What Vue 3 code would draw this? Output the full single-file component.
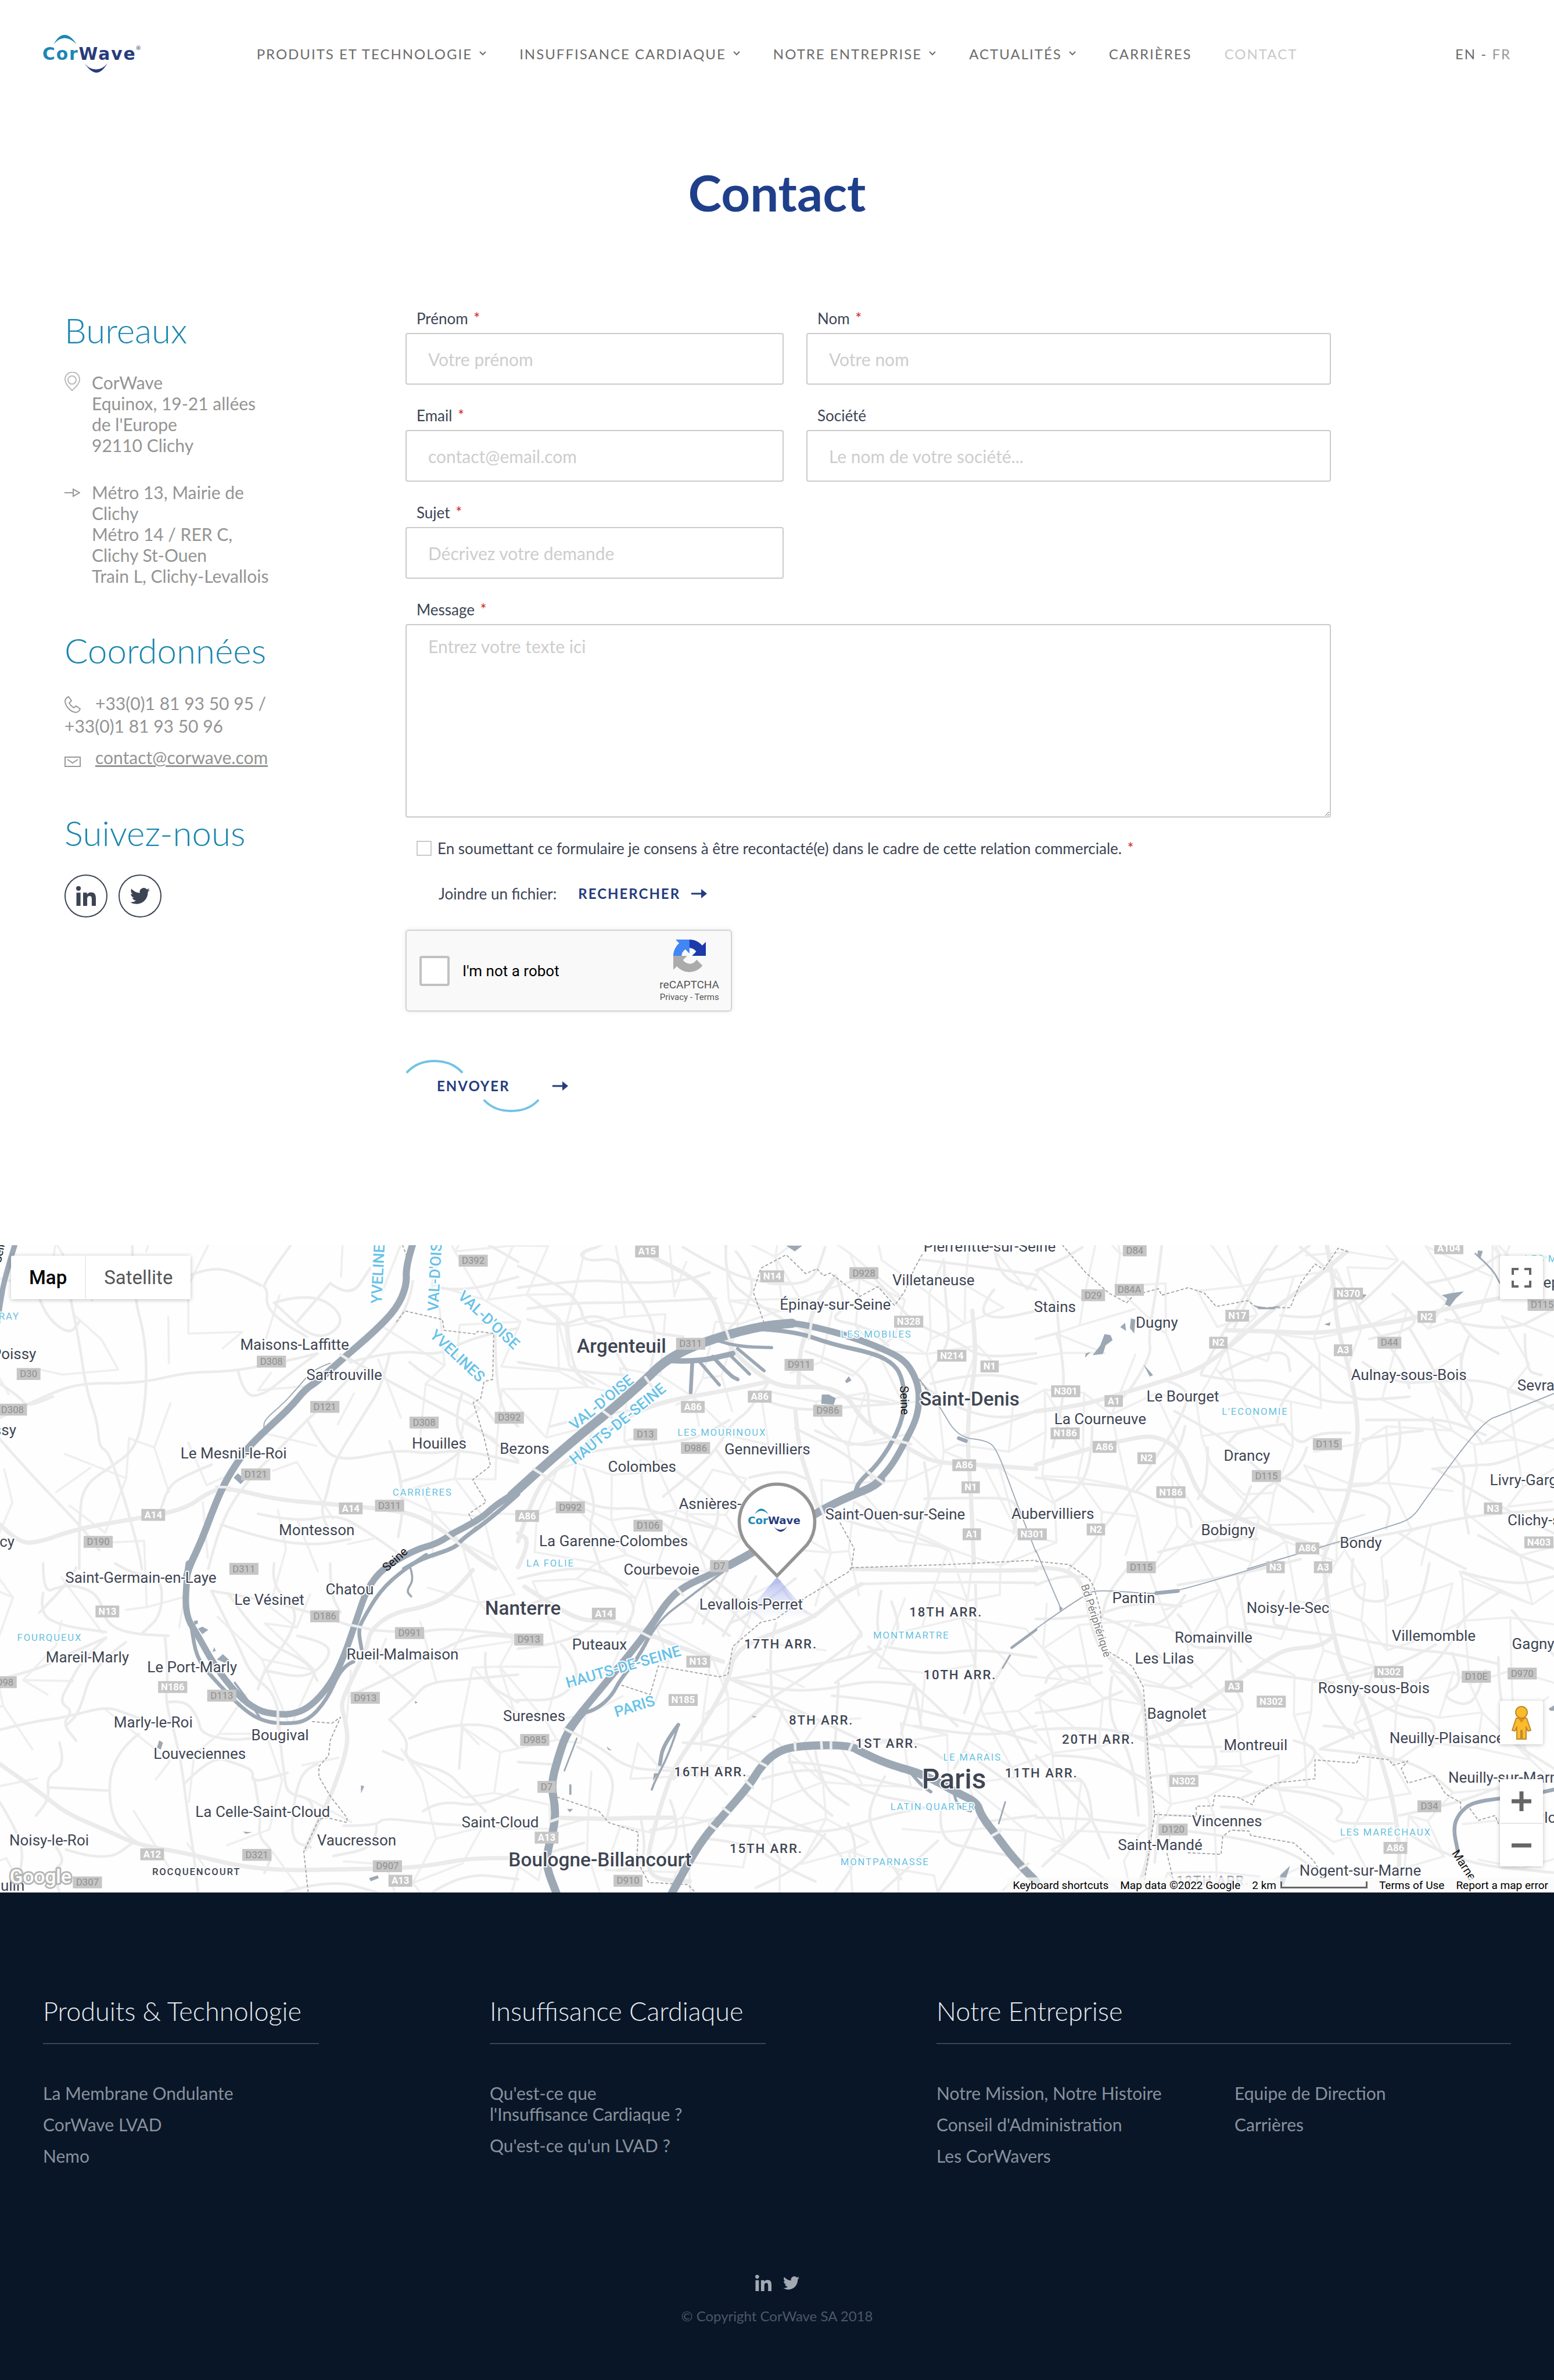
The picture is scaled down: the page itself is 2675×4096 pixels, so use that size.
<script setup>
import { ref } from 'vue'

const nav = [
  { label: 'Produits et Technologie', menu: true },
  { label: 'Insuffisance Cardiaque', menu: true },
  { label: 'Notre Entreprise', menu: true },
  { label: 'Actualités', menu: true },
  { label: 'Carrières' },
  { label: 'Contact', current: true }
]

const fields = [
  { id: 'firstname', label: 'Prénom', required: true, hint: 'Votre prénom', type: 'text' },
  { id: 'lastname', label: 'Nom', required: true, hint: 'Votre nom', type: 'text' },
  { id: 'email', label: 'Email', required: true, hint: 'contact@email.com', type: 'email' },
  { id: 'company', label: 'Société', required: false, hint: 'Le nom de votre société...', type: 'text' },
  { id: 'subject', label: 'Sujet', required: true, hint: 'Décrivez votre demande', type: 'text' }
]

const footer = [
  { title: 'Produits & Technologie', lists: [['La Membrane Ondulante', 'CorWave LVAD', 'Nemo']] },
  { title: 'Insuffisance Cardiaque', lists: [["Qu'est-ce que l'Insuffisance Cardiaque ?", "Qu'est-ce qu'un LVAD ?"]] },
  {
    title: 'Notre Entreprise',
    lists: [
      ['Notre Mission, Notre Histoire', "Conseil d'Administration", 'Les CorWavers'],
      ['Equipe de Direction', 'Carrières']
    ]
  }
]

const consent = ref(false)
const human = ref(false)

/* Map: six tiles, three across and two down; each tile has its own 1568-unit grid. */
const origin = { a: [0, -20], b: [960, -20], c: [1920, -20], d: [0, 590], e: [960, 590], f: [1920, 590] }
const place = (t, u, v) => [
  Math.round(origin[t][0] + (u * 960) / 1568),
  Math.round(origin[t][1] + (v * 620) / 1568)
]
const points = (t, s) => s.split(' ').map((p) => place(t, ...p.split(',').map(Number)))
const line = (t, s) => 'M' + points(t, s).map((p) => p.join(' ')).join('L')
const curve = (t, s) => {
  const p = points(t, s)
  let d = `M${p[0][0]} ${p[0][1]}`
  for (let i = 1; i < p.length - 1; i++) {
    d += `Q${p[i][0]} ${p[i][1]} ${(p[i][0] + p[i + 1][0]) / 2} ${(p[i][1] + p[i + 1][1]) / 2}`
  }
  const e = p[p.length - 1]
  return d + `L${e[0]} ${e[1]}`
}

const highways = [
  ['a', '0,1360 50,1440 110,1450 230,1380 420,1330 560,1290 640,1200 700,1190 840,1245 1000,1265 1180,1290 1270,1320 1370,1420 1450,1520 1500,1568'],
  ['d', '0,940 120,1070 200,1170 320,1250 420,1320 560,1355 720,1420 860,1440 1000,1435 1200,1430 1300,1415 1420,1380 1568,1380'],
  ['d', '1430,30 1380,130 1300,200 1190,230 1120,310 1110,400 1060,560 1030,660 1045,730 1055,850 1010,1060 960,1220 925,1340'],
  ['b', '400,100 480,160 560,240 600,330 620,440 640,530 720,650 800,720 930,710 1000,760 1040,870 1130,960 1200,1020 1260,1070 1400,1080 1568,1100'],
  ['b', '0,1560 40,1440 0,1400'],
  ['b', '0,1440 50,1200 110,1110 200,1000 330,850 450,780 600,740 760,690'],
  ['c', '0,830 120,810 250,750 400,680 500,630 600,510 700,370 820,240 940,80'],
  ['c', '0,1080 170,1000 280,960 360,940 440,1010 480,1180 520,1260 640,1350 760,1420 870,1470'],
  ['c', '880,50 900,200 910,430 950,640 975,860 970,1000 950,1200 910,1380 870,1500 870,1568'],
  ['f', '870,0 880,150 900,330 930,500 990,640 1020,780 1050,950 1080,1100 1100,1300 1100,1480'],
  ['f', '0,20 60,20 120,50 150,140 170,300 200,410 280,520 320,620 335,760 335,940 350,1170 340,1400 300,1540'],
  ['f', '900,340 870,390 760,400 700,450 600,560 480,680 420,780 340,820'],
  ['e', '1010,25 1200,30 1400,35 1568,30'],
  ['e', '1040,95 960,160 900,250 800,310 700,370 650,440 640,530 600,660 540,800 470,960 440,1100 410,1250 390,1400 410,1480 520,1490'],
  ['e', '20,110 120,210 200,270 270,260 380,320 500,400 620,460'],
  ['c', '580,450 720,455 850,465 960,440 1130,400 1240,350 1400,300'],
  ['b', '840,830 850,1000 880,1150 910,1290'],
  ['b', '850,700 850,560 880,430 900,330 960,200'],
  ['b', '1375,360 1390,560 1365,800 1360,1000 1370,1200 1380,1540'],
  ['e', '110,1190 250,1200 370,1190 470,1190']
].map(([t, s]) => curve(t, s))

const streets = [
  ['a', '880,50 790,240 810,260 805,340 860,420 930,480'],
  ['a', '580,190 630,160 700,170 790,240'],
  ['a', '400,50 405,290 440,480 445,700 430,900 400,1020 340,1085 250,1180 240,1350 240,1568'],
  ['a', '210,280 240,500 260,720 295,880 300,1000 330,1020 380,1260 420,1480 430,1568'],
  ['a', '0,860 120,770 240,695 420,700 570,645 700,645 880,590 960,560'],
  ['a', '830,320 945,265 1055,400 960,510 830,320'],
  ['a', '1000,230 900,410'],
  ['a', '1000,230 1060,300 1120,160'],
  ['a', '0,960 90,1120 240,1360 300,1480'],
  ['a', '1250,220 1240,330 1170,480 1100,600 1020,740 930,870 860,980 770,1120 700,1260 660,1400 630,1568'],
  ['a', '1040,570 1180,690 1300,790 1420,880 1568,1060'],
  ['a', '1060,600 1200,540 1330,570 1420,490 1568,440'],
  ['a', '1180,560 1160,700 1100,850 1010,1070 990,1220 970,1300 1000,1400'],
  ['a', '930,870 960,960 1020,1070 1200,1010 1300,1030 1400,1010 1568,1070'],
  ['a', '1180,970 1210,1100 1220,1290 1205,1420'],
  ['a', '1400,740 1370,880 1420,1000 1300,1120 1210,1160'],
  ['a', '120,300 140,390 210,470 240,410'],
  ['a', '0,700 60,760 80,810 160,760'],
  ['a', '670,1360 800,1430 950,1460 1060,1430'],
  ['a', '780,1310 900,1350 1020,1310 1110,1390 1200,1490'],
  ['a', '1240,600 1300,680 1440,760 1500,880'],
  ['a', '1500,460 1500,640 1520,830 1568,900'],
  ['a', '1330,250 1400,270 1568,200'],
  ['a', '1480,50 1568,130'],
  ['a', '720,640 740,760 800,750 870,660 960,560'],
  ['a', '640,1080 560,1130 510,1180 480,1320'],
  ['b', '0,150 120,230 190,330 200,420 280,440 290,540 330,640'],
  ['b', '240,60 180,80 210,130 300,110 330,220 390,350 420,480 400,640'],
  ['b', '30,350 150,320 300,320 480,310 600,300'],
  ['b', '30,400 120,440 230,370 300,430 400,460 500,480'],
  ['b', '0,250 200,210 340,230 500,220 580,180'],
  ['b', '500,60 560,120 700,220 830,230'],
  ['b', '630,50 620,200 720,320 800,400 880,460'],
  ['b', '660,80 720,200 690,360 640,440'],
  ['b', '760,230 840,240 900,200 930,60'],
  ['b', '960,190 1000,340 940,400 1050,430 1120,520'],
  ['b', '1070,190 1150,330 1200,420 1330,500 1400,580 1568,560'],
  ['b', '1220,120 1380,150 1568,190'],
  ['b', '1290,130 1290,260 1310,480 1270,600 1220,680'],
  ['b', '1440,260 1390,360 1450,400 1568,360'],
  ['b', '1440,50 1450,200 1568,260'],
  ['b', '870,550 1000,620 1060,700 1060,850 1080,930'],
  ['b', '850,650 960,760 1120,790'],
  ['b', '760,690 700,830 650,880 600,1010 540,1100 440,1230'],
  ['b', '840,910 960,1000 1040,1090 1080,1160'],
  ['b', '750,780 830,830 1000,810 1180,790'],
  ['b', '450,780 370,820 200,860 100,900'],
  ['b', '160,1040 250,1010 370,990 540,960 640,870'],
  ['b', '60,1110 160,1230 260,1290 370,1280 480,1330 600,1380'],
  ['b', '200,1100 240,1260 210,1380 250,1568'],
  ['b', '370,1060 375,1280 470,1390 600,1540'],
  ['b', '600,1010 660,1140 700,1200'],
  ['b', '430,1060 560,1190 620,1300 560,1480'],
  ['b', '1220,700 1300,800 1450,870 1568,830'],
  ['b', '1250,700 1400,640 1568,700'],
  ['b', '1350,940 1450,900 1568,830'],
  ['b', '1230,1070 1250,1240 1230,1300 1180,1568'],
  ['b', '1230,1240 1380,1235 1520,1240 1500,1400'],
  ['b', '920,1300 1060,1380 1180,1400 1300,1480'],
  ['b', '900,920 1010,1000 1130,970'],
  ['b', '700,1140 800,1100 880,1150'],
  ['b', '0,600 150,640 330,660'],
  ['b', '150,420 160,640 230,700'],
  ['c', '380,50 370,200 340,480 350,560 290,720 240,800'],
  ['c', '0,170 80,120 140,60'],
  ['c', '0,190 60,280 70,480 90,720 50,1000'],
  ['c', '70,460 0,490'],
  ['c', '830,50 720,180 690,150 600,440'],
  ['c', '730,50 640,260 560,480 500,650'],
  ['c', '740,380 840,400 900,350 990,290'],
  ['c', '800,60 900,180 960,300 1030,460 1110,600 1130,720'],
  ['c', '1110,130 1050,230 980,330'],
  ['c', '1110,130 1180,230 1260,340 1310,480 1400,560'],
  ['c', '1080,280 1140,360 1150,440 1010,490'],
  ['c', '1180,230 1300,200 1400,100'],
  ['c', '720,460 840,610 890,690 960,780 1080,770 1130,760'],
  ['c', '500,660 600,690 700,680 780,720 880,790 970,790'],
  ['c', '840,610 770,730 740,800 730,880'],
  ['c', '560,650 640,580 760,540 770,640'],
  ['c', '990,600 1080,700 1200,690 1300,680 1400,700 1568,820'],
  ['c', '1130,440 1200,620 1220,700 1290,840 1350,980'],
  ['c', '1310,480 1270,620 1330,760 1300,870'],
  ['c', '1480,470 1480,640 1530,660'],
  ['c', '1240,400 1420,470 1568,350'],
  ['c', '400,690 470,720 440,860 360,1060 260,1260 170,1450 100,1568'],
  ['c', '420,830 530,920 600,1000 700,1140 800,1240 840,1300'],
  ['c', '450,900 440,1000 380,1080 300,1210'],
  ['c', '520,1000 520,1160 490,1240'],
  ['c', '750,890 790,1000 850,930 950,930'],
  ['c', '750,890 620,910 580,980'],
  ['c', '1000,870 1140,870 1250,870 1360,940'],
  ['c', '990,960 1100,930 1170,920'],
  ['c', '1100,880 1110,1010 1040,1170 950,1180'],
  ['c', '1200,860 1210,980 1300,1090 1290,1240 1310,1400'],
  ['c', '1360,970 1500,830 1568,800'],
  ['c', '1200,1100 1330,1080 1400,1080 1568,960'],
  ['c', '1210,1100 1350,1230 1500,1350 1568,1400'],
  ['c', '700,1180 620,1300 590,1390 640,1430 670,1430'],
  ['c', '750,1140 860,1200 940,1200'],
  ['c', '820,1000 800,1100 700,1180'],
  ['c', '0,1140 150,1170 290,1190 400,1280 460,1280 470,1370'],
  ['c', '170,900 170,1020 140,1180 60,1250'],
  ['c', '900,1450 1100,1400 1300,1320 1568,1290'],
  ['c', '1100,1400 1210,1500 1300,1568'],
  ['c', '540,1440 620,1300 650,1180'],
  ['c', '370,1490 500,1440 620,1430'],
  ['c', '1340,1410 1450,1500 1568,1568'],
  ['c', '940,1200 1080,1230 1060,1380'],
  ['d', '130,0 130,140 180,110 230,100 300,150 320,280 390,330 510,340'],
  ['d', '130,140 120,230 180,290 320,320'],
  ['d', '0,540 110,500 200,430 320,350'],
  ['d', '320,350 250,450 210,560 180,650 220,690 190,750 230,830'],
  ['d', '380,370 280,480 240,700 200,760'],
  ['d', '0,780 100,740 200,720 320,670 380,700 480,760'],
  ['d', '180,840 200,940 140,1000 150,1100 110,1180'],
  ['d', '150,1050 330,1065'],
  ['d', '420,800 335,900 330,1180 400,1300 470,1350'],
  ['d', '500,350 510,520 500,640 530,800 550,950 570,1200 585,1340 600,1540'],
  ['d', '510,650 560,640 600,720 610,800 700,830 760,820'],
  ['d', '560,1030 640,900 720,940 770,970 760,1030 870,980'],
  ['d', '770,1010 790,1180 780,1280 830,1350 800,1450'],
  ['d', '850,850 860,1000 870,1080 940,1100 950,1180'],
  ['d', '960,940 920,960 890,1100 880,1300 940,1330'],
  ['d', '690,140 760,290 830,390 930,460 960,550'],
  ['d', '640,130 720,380 760,520 840,620 850,850'],
  ['d', '640,130 760,160 900,210 1060,290'],
  ['d', '830,0 820,100 900,210 880,340 800,500 780,590'],
  ['d', '900,340 990,370 1000,440 930,540 800,500'],
  ['d', '1040,1230 1140,1230 1160,1190 1300,1220 1430,1230'],
  ['d', '1140,1230 1140,1330 1010,1370'],
  ['d', '1280,1160 1330,1110 1450,1140 1568,1060'],
  ['d', '1180,730 1250,640 1290,560 1420,540 1568,520'],
  ['d', '1180,730 1240,820 1220,920 1350,970 1400,1050 1470,1160'],
  ['d', '1160,880 1220,920'],
  ['d', '1240,820 1330,760 1500,750 1568,860'],
  ['d', '1400,760 1390,960'],
  ['d', '1060,620 1200,520 1300,430 1440,330 1568,350'],
  ['d', '1120,310 1250,330 1350,300 1568,340'],
  ['d', '1150,480 1250,620'],
  ['d', '1470,420 1460,560 1568,650'],
  ['d', '1000,0 1000,140 1030,230'],
  ['d', '200,1340 320,1400 410,1300'],
  ['d', '170,1330 200,1390 160,1440 180,1540'],
  ['d', '0,1120 40,1220 70,1340 60,1460'],
  ['d', '860,1540 1000,1480 1140,1540'],
  ['d', '1310,1540 1400,1450 1568,1480'],
  ['d', '350,0 400,50 490,60 490,240 430,330'],
  ['d', '230,20 210,80 120,230'],
  ['e', '0,70 130,20 250,30 330,100'],
  ['e', '20,200 200,100 330,130 360,230 300,330'],
  ['e', '0,400 130,380 240,280'],
  ['e', '130,380 200,500 130,640 0,640'],
  ['e', '560,90 700,300'],
  ['e', '600,80 740,260'],
  ['e', '500,180 640,340'],
  ['e', '640,10 560,280'],
  ['e', '720,60 620,340'],
  ['e', '840,70 700,240 640,280'],
  ['e', '900,30 960,150 1040,330'],
  ['e', '1040,95 1300,85 1568,90'],
  ['e', '1100,130 1080,290 1110,390 960,560'],
  ['e', '1110,390 1250,430 1390,400 1568,440'],
  ['e', '640,540 800,600 940,590 1060,550 1200,570'],
  ['e', '640,540 770,630 890,720 1040,830'],
  ['e', '640,540 900,480 1100,400'],
  ['e', '770,630 760,420 780,280'],
  ['e', '770,630 900,500 1040,340'],
  ['e', '770,630 680,780 560,840'],
  ['e', '770,630 850,830'],
  ['e', '770,630 640,800 540,1000'],
  ['e', '970,560 960,830'],
  ['e', '1200,570 1220,760'],
  ['e', '1200,570 1160,800'],
  ['e', '1060,390 1200,570 1330,760'],
  ['e', '1385,100 1390,400 1370,620 1350,700'],
  ['e', '1490,430 1420,600 1350,880 1320,960'],
  ['e', '1430,560 1480,740 1568,980'],
  ['e', '1200,760 1400,820 1568,760'],
  ['e', '950,620 1100,640 1300,720 1420,770 1568,840'],
  ['e', '1040,830 1200,820 1300,930'],
  ['e', '1350,880 1500,1040 1568,1140'],
  ['e', '820,900 840,1040 950,1180'],
  ['e', '900,880 920,1050 1000,1130'],
  ['e', '820,930 940,940 1060,1010 1220,1060'],
  ['e', '740,1010 840,960 960,980 1060,1080 1200,1120'],
  ['e', '1110,1000 1060,1130 1070,1260 1160,1480'],
  ['e', '620,1230 780,1230 930,1270 1110,1180 1270,1130'],
  ['e', '690,1080 800,1200 930,1270 1000,1420'],
  ['e', '930,1270 860,1420 720,1520'],
  ['e', '570,1290 700,1310 800,1420 900,1490'],
  ['e', '1000,1220 1040,1360 960,1540'],
  ['e', '1280,1150 1270,1300 1390,1340 1490,1370'],
  ['e', '1270,1300 1150,1470 1100,1540'],
  ['e', '1390,1190 1350,1340 1270,1540'],
  ['e', '1568,1180 1420,1210'],
  ['e', '500,840 640,850 740,940'],
  ['e', '470,1010 550,920 700,1000'],
  ['e', '400,1250 520,1230 600,1190'],
  ['e', '460,1110 500,1260 420,1400'],
  ['e', '370,1190 400,1400 300,1440'],
  ['e', '150,780 240,850 330,960 460,970'],
  ['e', '180,860 300,950 270,1190'],
  ['e', '0,930 100,940'],
  ['e', '0,1400 80,1360 200,1310'],
  ['e', '800,120 840,200 900,250'],
  ['e', '1130,180 1160,290 1130,380'],
  ['f', '0,100 60,60 150,60'],
  ['f', '0,260 150,260 300,180 440,200'],
  ['f', '170,240 290,290 400,480 470,580'],
  ['f', '290,0 220,120 200,250'],
  ['f', '450,150 400,280 300,290'],
  ['f', '430,100 620,50 800,-20'],
  ['f', '430,240 480,320 460,400 590,390 620,460'],
  ['f', '590,390 480,600 330,570'],
  ['f', '590,390 590,560 640,680 560,740 430,760'],
  ['f', '610,60 640,350'],
  ['f', '640,280 770,310 900,340'],
  ['f', '750,130 700,280 760,300'],
  ['f', '900,330 1100,400 1260,420 1400,470'],
  ['f', '960,-20 940,160 1070,190 1060,80'],
  ['f', '1190,0 1170,180 1110,300'],
  ['f', '1290,40 1440,110 1568,60'],
  ['f', '1410,130 1290,240 1250,400 1150,560'],
  ['f', '1210,380 1100,480 940,540'],
  ['f', '1260,420 1300,560 1220,620 1320,680 1360,500'],
  ['f', '1010,630 1100,720 1210,720 1200,860'],
  ['f', '860,870 960,800 1010,780'],
  ['f', '860,870 1060,900 1180,960 1260,1070'],
  ['f', '620,1100 800,1000 860,870 780,830'],
  ['f', '500,660 550,900 540,980 430,980'],
  ['f', '350,1000 480,970 620,1010 740,1060'],
  ['f', '350,850 450,860 560,860'],
  ['f', '560,880 660,880 760,830'],
  ['f', '560,1140 720,1150 830,1250 900,1360'],
  ['f', '370,1170 360,1400'],
  ['f', '370,1240 560,1270 760,1340 860,1450'],
  ['f', '740,1060 860,1080 940,1150 890,1220 1080,1220'],
  ['f', '1100,1180 1260,1130 1400,1050'],
  ['f', '0,900 130,1100 170,1200 220,1380'],
  ['f', '170,1200 330,1230'],
  ['f', '170,1200 0,1190'],
  ['f', '170,1200 160,1010 80,1000'],
  ['f', '170,1200 20,1420'],
  ['f', '0,620 90,560 200,510'],
  ['f', '0,700 140,680 260,600'],
  ['f', '30,560 40,480 200,480'],
  ['f', '0,780 180,760 330,820'],
  ['f', '230,530 210,700 290,900 310,1180'],
  ['f', '50,900 180,900 330,1010'],
  ['f', '960,820 870,640 880,560'],
  ['f', '870,760 960,770 960,820'],
  ['f', '1120,1260 1260,1400 1568,1450'],
  ['f', '1440,220 1500,330 1568,430'],
  ['f', '1400,440 1400,800 1568,960'],
  ['f', '640,500 760,530 900,560']
].map(([t, s]) => curve(t, s))

/* Small side streets: a loose lattice with a fixed seed, thinner in the western forests. */
const lanes = (() => {
  let seed = 41
  const rnd = () => (seed = (seed * 16807) % 2147483647) / 2147483647
  const step = 72
  const cols = 42
  const rows = 19
  const node = []
  for (let r = 0; r < rows; r++) {
    node.push([])
    for (let c = 0; c < cols; c++) {
      node[r].push([Math.round((c - 1 + (rnd() - 0.5) * 0.9) * step), Math.round((r - 1 + (rnd() - 0.5) * 0.9) * step)])
    }
  }
  let d = ''
  for (let r = 0; r < rows - 1; r++) {
    for (let c = 0; c < cols - 1; c++) {
      const keep = c < 12 ? 0.22 : 0.6
      const [x, y] = node[r][c]
      if (rnd() < keep) d += `M${x} ${y}L${node[r][c + 1].join(' ')}`
      if (rnd() < keep) d += `M${x} ${y}L${node[r + 1][c].join(' ')}`
      if (rnd() < keep * 0.3) d += `M${x} ${y}L${node[r + 1][c + 1].join(' ')}`
    }
  }
  return d
})()

const rivers = [
  [13, 'a', '1250,45 1228,150 1232,240 1200,350 1130,460 1040,580 960,690 925,725 880,810 810,910 750,1000 700,1110 670,1200 640,1310 610,1440 575,1550 565,1600'],
  [12, 'd', '572,0 565,60 560,240 600,340 650,480 720,620 780,690 840,708 890,705 940,670 1000,570 1040,440 1080,260 1110,120 1160,20 1260,-65 1320,-90 1370,-140'],
  [12, 'a', '1365,1405 1450,1340 1500,1270 1568,1205'],
  [17, 'b', '-20,1225 60,1110 180,950 270,840 380,690 440,600 520,530 620,475 740,430 830,418'],
  [12, 'b', '800,418 830,416 900,435 1010,480 1110,540 1170,590 1200,660 1215,740 1210,850 1180,950 1130,1090 1080,1170'],
  [15, 'b', '1100,1150 1080,1180 1010,1225 920,1290 820,1390 700,1500 640,1550'],
  [13, 'e', '690,-30 600,40 500,110 450,180 400,300 330,440 260,570 190,700 150,780'],
  [15, 'e', '200,690 150,780 120,920 100,1040 115,1150 108,1250 90,1340 85,1420 118,1550'],
  [8, 'b', '0,1220 -80,1330 -170,1430 -190,1470 -290,1520 -345,1568'],
  [7, 'd', '1290,-40 1220,30 1150,130 1100,260 1085,310 1095,400'],
  [7, 'd', '1070,460 1035,480 990,640 930,740 860,752 800,740 740,690 640,530 595,440 580,300'],
  [4, 'd', '710,560 760,660 790,730'],
  [8, 'b', '740,445 840,455 950,515 1080,560 1140,610 1165,680 1172,800 1150,930 1090,1080 1030,1160 1020,1220'],
  [4, 'e', '620,40 560,110 500,180 440,250 400,340'],
  [7, 'e', '410,300 370,430 310,540 285,620 240,680 200,700'],
  [10, 'b', '450,592 540,600 650,560'],
  [7, 'b', '527,600 523,740'],
  [6, 'b', '550,600 610,705'],
  [7, 'b', '590,575 640,660 665,680'],
  [6, 'b', '640,565 700,655'],
  [6, 'b', '665,535 745,640'],
  [6, 'b', '610,500 660,525 768,530'],
  [15, 'e', '462,1555 510,1420 560,1290 620,1180 700,1040 735,950 780,885 840,856 1000,850 1040,885 1120,940 1230,990 1330,1075 1390,1120 1402,1180 1450,1280 1500,1380 1568,1490'],
  [6, 'e', '1190,985 1220,1040 1250,1070'],
  [5, 'e', '1320,1075 1328,1140 1370,1160'],
  [3, 'e', '1475,1118 1455,1220'],
  [7, 'e', '485,755 440,850 430,940'],
  [4, 'e', '485,760 460,880 415,1020 405,1060'],
  [3, 'e', '178,820 140,970'],
  [4, 'e', '158,1040 158,1080'],
  [7, 'f', '1568,1060 1480,1090 1405,1100 1320,1120 1280,1170 1262,1240 1278,1350'],
  [2, 'c', '640,1568 800,1495 1080,1365 1140,1330 1180,1240 1350,880 1420,840 1568,745'],
  [2, 'f', '0,305 150,140 200,125 360,145 430,130 700,5'],
  [7, 'f', '365,140 430,128'],
  [2, 'b', '1215,680 1270,790 1330,950 1420,965 1450,1010 1510,1260 1568,1490'],
  [7, 'b', '1335,955 1355,968'],
  [2, 'f', '0,-60 40,80 75,210'],
  [5, 'e', '1568,310 1495,395'],
  [3, 'e', '1490,430 1467,490'],
  [10, 'a', '45,45 15,200 0,330 -10,440'],
  [2, 'a', '1000,605 950,630 900,720 860,790 800,870 798,905'],
  [4, 'd', '1240,10 1255,70 1230,130 1245,155'],
  [3, 'c', '1330,90 1380,160 1405,230']
].map(([w, t, s]) => ({ w, d: curve(t, s) }))

/* Bridges cross the water in the road colour. */
const bridges = [
  ['a', '1030,565 1055,590'],
  ['a', '655,1183 695,1187'],
  ['a', '1350,1400 1400,1465'],
  ['b', '385,670 405,712'],
  ['b', '258,830 285,860'],
  ['b', '48,1100 78,1130'],
  ['b', '630,450 642,500'],
  ['b', '888,410 880,490'],
  ['b', '1120,955 1190,985'],
  ['b', '1060,1115 1105,1165'],
  ['b', '915,1275 925,1310'],
  ['d', '841,690 841,775'],
  ['d', '1060,288 1120,308'],
  ['e', '482,118 500,150'],
  ['e', '375,325 405,350'],
  ['e', '140,775 165,795'],
  ['e', '98,1210 130,1190'],
  ['e', '838,838 840,872'],
  ['e', '918,838 920,870'],
  ['e', '948,838 948,870'],
  ['e', '1015,835 1003,875'],
  ['e', '732,932 752,948'],
  ['e', '690,1018 712,1052'],
  ['e', '620,1145 642,1170'],
  ['e', '578,1222 600,1245'],
  ['e', '1435,1275 1460,1255'],
  ['e', '1520,1430 1545,1405']
].map(([t, s]) => line(t, s))

const ponds = [
  ['a', '720,1120 742,1150 728,1170 708,1140'],
  ['b', '812,52 860,52 838,82'],
  ['b', '920,750 940,750 962,770 955,798 918,795'],
  ['b', '1002,665 1010,685 995,697 990,688'],
  ['c', '208,468 225,472 232,495 210,520 203,562 172,566 195,520'],
  ['c', '165,552 148,580 150,560'],
  ['c', '270,415 272,452 255,435'],
  ['c', '288,395 300,400 298,465 285,440'],
  ['c', '325,610 355,660 345,668'],
  ['c', '1228,285 1260,275 1295,268 1270,300 1252,338 1238,328 1245,300'],
  ['c', '1338,75 1352,78 1345,120 1336,100'],
  ['c', '872,422 892,412 888,430'],
  ['c', '660,335 700,345 740,335 720,352 675,352'],
  ['c', '985,280 1002,282 985,308'],
  ['d', '586,270 598,265 600,280 590,288'],
  ['d', '600,305 612,295 630,310 612,332'],
  ['d', '675,425 695,455 680,465 656,450'],
  ['d', '648,392 654,410 644,416'],
  ['d', '482,830 494,840 486,872 476,862'],
  ['d', '1092,1040 1102,1045 1092,1078'],
  ['d', '1255,645 1264,650 1258,658'],
  ['d', '1118,1475 1144,1462 1146,1475 1122,1490'],
  ['d', '735,1258 762,1260 745,1266'],
  ['e', '268,858 284,878 272,872'],
  ['e', '148,1150 166,1150 156,1166'],
  ['e', '412,985 424,985 408,1020'],
  ['e', '708,712 724,718 714,724'],
  ['f', '740,1460 770,1415 750,1510 738,1490'],
  ['f', '1552,680 1568,665 1568,690 1556,690'],
  ['f', '70,200 82,210 72,225']
].map(([t, s]) => line(t, s) + 'Z')

const borders = [
  ['a', '1218,50 1230,95'],
  ['a', '1200,410 1225,360 1340,400 1345,450 1440,468 1445,455 1495,465 1492,680 1465,690 1455,770 1432,790 1465,950 1485,1085 1430,1150 1472,1255 1420,1310 1440,1380'],
  ['b', '745,415 712,270 735,160 812,95 870,185 905,162 925,195 945,182 1035,290 1090,245 1140,335 1170,270 1200,160 1225,90'],
  ['c', '80,50 150,180 220,275 275,320 295,285 370,255 380,285 460,250 510,275 545,340 640,310 670,345 770,345 800,230 845,140 870,165 915,65 950,85'],
  ['d', '945,740 1005,748 1030,720 1000,830 995,900 965,950 965,1000 1000,1090 1050,1190 1050,1215 990,1190 965,1200 920,1350 932,1540'],
  ['e', '975,-190 1018,-70 1010,20 1300,5 1568,-15'],
  ['e', '1010,20 1000,40 870,160 780,260 735,275 650,390 635,520 610,530 425,480 400,615 300,565'],
  ['e', '120,1095 245,1160 275,1215 365,1260 360,1390 395,1495 515,1505 535,1540'],
  ['f', '0,-10 100,5 160,70 175,110 195,220 205,400 290,480 325,580 340,900 360,1175 325,1520'],
  ['f', '360,1175 485,1185 485,1137 535,1135 540,1088 610,1095 655,1130 665,1090 720,1030 845,1010 845,920 970,935 980,903 1070,920 1080,945 1125,925 1105,960 1125,1030 1205,995 1240,1080 1285,1120 1285,1150'],
  ['f', '460,1355 560,1362 565,1280 590,1250 645,1255 650,1275 780,1310 840,1390 865,1460'],
  ['f', '415,1480 395,1350 405,1280'],
  ['f', '1305,1130 1340,1205 1390,1180 1400,1220'],
  ['b', '1215,680 1250,760']
].map(([t, s]) => line(t, s))

const shields = [
  'a D392 1432,124', 'a D308 821,597', 'a D30 86,655', 'a D308 37,822', 'a D121 983,809', 'a D308 1284,882',
  'a D392 1542,860', 'a D121 774,1126', 'a A14 464,1315', 'a A14 1062,1285', 'a D311 1180,1272', 'a D190 297,1442',
  'b A15 391,81', 'b N14 770,197', 'b D928 1047,182', 'b N328 1182,410', 'b D311 523,513', 'b D911 851,611',
  'b N214 1314,569', 'b N1 1428,619', 'b A86 731,761', 'b A86 529,809', 'b D986 938,827', 'b D13 386,938',
  'b D986 537,1001', 'b D992 158,1280', 'b A86 28,1320', 'b D106 394,1366', 'b N1 1371,1187', 'b A86 1351,1083',
  'b A1 1374,1406', 'b N301 1556,1406',
  'c D84 299,77', 'c D29 173,286', 'c D84A 282,261', 'c N370 945,278', 'c N17 609,381', 'c N2 1183,387',
  'c N2 552,508', 'c A3 930,544', 'c D44 1070,508', 'c D115 1532,331', 'c A104 1250,67', 'c N301 90,736',
  'c A1 235,781', 'c N186 88,933', 'c A86 207,996', 'c N2 335,1049', 'c D115 882,984', 'c D115 697,1133',
  'c N186 409,1209', 'c N2 182,1384', 'c N3 1384,1285', 'c N403 1522,1445', 'c A86 822,1473',
  'd D311 739,25', 'd N13 325,225', 'd D186 983,247', 'd D991 1240,325', 'd D98 14,557', 'd N186 522,579',
  'd D113 671,619', 'd D913 1105,630', 'd A12 461,1363', 'd D321 778,1365', 'd D907 1172,1419', 'd A13 1212,1487',
  'd D307 264,1494',
  'e D7 610,12', 'e A14 259,235', 'e D913 33,356', 'e N13 545,460', 'e N185 500,640', 'e D985 51,827',
  'e D7 86,1046', 'e A13 87,1285', 'e D910 333,1487',
  'f N3 726,18', 'f A3 869,18', 'f D115 318,18', 'f N302 1068,509', 'f D10E 1332,531', 'f D970 1472,516',
  'f A3 600,576', 'f N302 712,648', 'f N302 448,1019', 'f D120 415,1247', 'f D34 1190,1138', 'f A86 1088,1333'
].map((s) => {
  const [t, name, at] = s.split(' ')
  const [x, y] = place(t, ...at.split(',').map(Number))
  return { name, x, y, w: 14 + name.length * 10, minor: name[0] === 'D' }
})

const labels = [
  ['town', 'a', 891, 540, 'Maisons-Laffitte'], ['town', 'a', 1042, 684, 'Sartrouville'],
  ['town', 'a', 707, 1049, 'Le Mesnil-le-Roi'], ['town', 'a', 1330, 1004, 'Houilles'],
  ['town', 'a', 959, 1412, 'Montesson'], ['town', 'a', 42, 585, 'Poissy'], ['town', 'a', 14, 940, 'ssy'],
  ['town', 'a', 22, 1465, 'cy'], ['town', 'b', 20, 1030, 'Bezons'], ['town', 'b', 1257, 240, 'Villetaneuse'],
  ['town', 'b', 960, 355, 'Épinay-sur-Seine'], ['town', 'b', 755, 1032, 'Gennevilliers'],
  ['town', 'b', 376, 1112, 'Colombes'], ['town', 'b', 582, 1288, 'Asnières-'],
  ['town', 'b', 1141, 1339, 'Saint-Ouen-sur-Seine'], ['town', 'b', 289, 1461, 'La Garenne-Colombes'],
  ['town', 'b', 1427, 80, 'Pierrefitte-sur-Seine'], ['town', 'c', 51, 1332, 'Aubervilliers'],
  ['town', 'c', 57, 363, 'Stains'], ['town', 'c', 366, 437, 'Dugny'], ['town', 'c', 1128, 682, 'Aulnay-sous-Bois'],
  ['town start', 'c', 1457, 732, 'Sevran'], ['town', 'c', 445, 783, 'Le Bourget'],
  ['town', 'c', 195, 889, 'La Courneuve'], ['town', 'c', 639, 1061, 'Drancy'], ['town', 'c', 582, 1412, 'Bobigny'],
  ['town', 'c', 983, 1470, 'Bondy'], ['town start', 'c', 1374, 1175, 'Livry-Gargan'],
  ['town start', 'c', 1428, 1362, 'Clichy-sous-Bois'], ['town start', 'c', 1535, 250, 'epinte'],
  ['town', 'd', 426, 90, 'Saint-Germain-en-Laye'], ['town', 'd', 1058, 144, 'Chatou'],
  ['town', 'd', 815, 194, 'Le Vésinet'], ['town', 'd', 1218, 450, 'Rueil-Malmaison'],
  ['town', 'd', 264, 462, 'Mareil-Marly'], ['town', 'd', 581, 512, 'Le Port-Marly'],
  ['town', 'd', 464, 769, 'Marly-le-Roi'], ['town', 'd', 847, 830, 'Bougival'],
  ['town', 'd', 604, 916, 'Louveciennes'], ['town', 'd', 795, 1188, 'La Celle-Saint-Cloud'],
  ['town', 'd', 148, 1322, 'Noisy-le-Roi'], ['town', 'd', 1079, 1319, 'Vaucresson'],
  ['town start', 'd', 2, 1532, 'ulin'], ['town', 'd', 1514, 1236, 'Saint-Cloud'],
  ['town', 'e', 434, 52, 'Courbevoie'], ['town', 'e', 705, 216, 'Levallois-Perret'],
  ['town', 'e', 247, 405, 'Puteaux'], ['town', 'e', 49, 739, 'Suresnes'], ['town', 'f', 295, 186, 'Pantin'],
  ['town', 'f', 763, 233, 'Noisy-le-Sec'], ['town', 'f', 538, 373, 'Romainville'],
  ['town', 'f', 1203, 361, 'Villemomble'], ['town start', 'f', 1440, 402, 'Gagny'],
  ['town', 'f', 388, 467, 'Les Lilas'], ['town', 'f', 1022, 608, 'Rosny-sous-Bois'],
  ['town', 'f', 427, 728, 'Bagnolet'], ['town', 'f', 665, 874, 'Montreuil'],
  ['town start', 'f', 1070, 843, 'Neuilly-Plaisance'], ['town start', 'f', 1248, 1028, 'Neuilly-sur-Marne'],
  ['town', 'f', 579, 1232, 'Vincennes'], ['town', 'f', 375, 1342, 'Saint-Mandé'],
  ['town', 'f', 982, 1462, 'Nogent-sur-Marne'], ['town start', 'f', 1538, 1215, 'lo'],
  ['city', 'b', 313, 553, 'Argenteuil'], ['city', 'b', 1367, 801, 'Saint-Denis'],
  ['city', 'e', 15, 240, 'Nanterre'], ['city', 'e', 249, 1420, 'Boulogne-Billancourt'],
  ['capital', 'e', 1319, 1055, 'Paris'],
  ['arr', 'e', 1295, 249, '18TH ARR.'], ['arr', 'e', 795, 399, '17TH ARR.'], ['arr', 'e', 1337, 543, '10TH ARR.'],
  ['arr', 'e', 918, 755, '8TH ARR.'], ['arr', 'e', 1118, 865, '1ST ARR.'], ['arr', 'e', 583, 997, '16TH ARR.'],
  ['arr', 'e', 752, 1357, '15TH ARR.'], ['arr', 'e', 1585, 1003, '11TH ARR.'], ['arr', 'f', 190, 845, '20TH ARR.'],
  ['arr faded', 'f', 535, 1508, '12TH ARR.'],
  ['hamlet', 'd', 595, 1460, 'ROCQUENCOURT'],
  ['area', 'a', 28, 400, 'RAY'], ['area', 'a', 1279, 1223, 'CARRIÈRES'], ['area', 'b', 1084, 484, 'LES MOBILES'],
  ['area', 'b', 617, 943, 'LES MOURINOUX'], ['area', 'b', 98, 1557, 'LA FOLIE'], ['area', 'c', 663, 847, "L'ECONOMIE"],
  ['area start', 'c', 1480, 132, 'LES MARES'], ['area', 'd', 150, 362, 'FOURQUEUX'],
  ['area', 'e', 1191, 351, 'MONTMARTRE'], ['area', 'e', 1375, 923, 'LE MARAIS'],
  ['area', 'e', 1256, 1156, 'LATIN QUARTER'], ['area', 'e', 1110, 1414, 'MONTPARNASSE'],
  ['area', 'f', 1058, 1275, 'LES MARÉCHAUX'],
  ['dept start', 'a', 1155, 327, 'YVELINES', -87], ['dept start', 'a', 1326, 362, "VAL-D'OISE", -87],
  ['dept start', 'a', 1383, 296, "VAL-D'OISE", 43], ['dept start', 'a', 1298, 478, 'YVELINES', 43],
  ['dept start', 'b', 172, 920, "VAL-D'OISE", -39], ['dept start', 'b', 172, 1083, 'HAUTS-DE-SEINE', -39],
  ['dept start', 'e', 150, 585, 'HAUTS-DE-SEINE', -16], ['dept start', 'e', 298, 720, 'PARIS', -17],
  ['water', 'a', 1204, 1538, 'Seine', -42], ['water', 'b', 1158, 780, 'Seine', 88],
  ['water', 'a', 12, 70, 'Seine', -78], ['water', 'f', 1285, 1425, 'Marne', 57],
  ['road start', 'f', 136, 103, 'Bd Périphérique', 72]
].map(([kind, t, u, v, text, turn = 0]) => {
  const [x, y] = place(t, u, v)
  return { kind, text, x, y, turn: turn ? `rotate(${turn} ${x} ${y})` : undefined }
})
</script>

<template>
  <div class="page">
    <svg class="sprite" aria-hidden="true">
      <symbol id="corwave" viewBox="0 0 172 72">
        <path d="M20 18Q29 1 40 1T62 18Q50 7 40 7T20 18Z" fill="#1b87b5" />
        <path d="M77 54Q89 71 99 71T119 54Q110 65 98 65T77 54Z" fill="#273c7d" />
        <text x="-1" y="47" font-family="'DejaVu Sans', sans-serif" font-weight="700" font-size="32" fill="#1b87b5">Cor<tspan fill="#273c7d">Wave</tspan></text>
      </symbol>
      <symbol id="linkedin" viewBox="0 0 448 448">
        <path d="M100.28 448H7.4V148.9h92.88zM53.79 108.1C24.09 108.1 0 83.5 0 53.8a53.79 53.79 0 0 1 107.58 0c0 29.7-24.1 54.3-53.79 54.3zM447.9 448h-92.68V302.4c0-34.7-.7-79.2-48.29-79.2-48.29 0-55.69 37.7-55.69 76.7V448h-92.78V148.9h89.08v40.8h1.3c12.4-23.5 42.69-48.3 87.88-48.3 94 0 111.28 61.9 111.28 142.3V448z" />
      </symbol>
      <symbol id="twitter" viewBox="0 2 24 20">
        <path d="M23.953 4.57a10 10 0 01-2.825.775 4.958 4.958 0 002.163-2.723c-.951.555-2.005.959-3.127 1.184a4.92 4.92 0 00-8.384 4.482C7.69 8.095 4.067 6.13 1.64 3.162a4.822 4.822 0 00-.666 2.475c0 1.71.87 3.213 2.188 4.096a4.904 4.904 0 01-2.228-.616v.06a4.923 4.923 0 003.946 4.827 4.996 4.996 0 01-2.212.085 4.936 4.936 0 004.604 3.417 9.867 9.867 0 01-6.102 2.105c-.39 0-.779-.023-1.17-.067a13.995 13.995 0 007.557 2.209c9.053 0 13.998-7.496 13.998-13.985 0-.21 0-.42-.015-.63A9.935 9.935 0 0024 4.59z" />
      </symbol>
      <symbol id="arrow" viewBox="0 0 28 18">
        <path d="M2 9H20" stroke="currentColor" stroke-width="3" stroke-linecap="round" />
        <path d="M18 1L28 9L18 17Z" fill="currentColor" />
      </symbol>
    </svg>

    <header class="header">
      <a href="#" class="brand" aria-label="CorWave">
        <svg width="160" height="67"><use href="#corwave" /></svg>
        <sup>®</sup>
      </a>
      <nav class="nav">
        <a v-for="item in nav" :key="item.label" href="#" :class="{ current: item.current }">
          {{ item.label }}
          <svg v-if="item.menu" width="14" height="10" viewBox="0 0 14 10"><path d="M2 2L7 7L12 2" fill="none" stroke="currentColor" stroke-width="2" /></svg>
        </a>
      </nav>
      <div class="langs"><a href="#">EN</a> - <a href="#" class="lang-off">FR</a></div>
    </header>

    <h1>Contact</h1>

    <main class="main">
      <aside class="aside">
        <h2>Bureaux</h2>
        <div class="spot">
          <svg width="27" height="34" viewBox="0 0 27 34" fill="none" stroke="#b9b9b9" stroke-width="2"><path d="M13 32Q1 21 1 13A12 12 0 0 1 26 13Q26 21 13 32Z" /><circle cx="13" cy="14" r="7" /></svg>
          <p>CorWave<br />Equinox, 19-21 allées de l'Europe<br />92110 Clichy</p>
        </div>
        <div class="spot">
          <svg width="27" height="34" viewBox="0 0 27 34" fill="none" stroke="#999" stroke-width="2"><path d="M0 19H15M15 13V25L26 19Z" /></svg>
          <p>Métro 13, Mairie de Clichy<br />Métro 14 / RER C, Clichy St-Ouen<br />Train L, Clichy-Levallois</p>
        </div>
        <h2>Coordonnées</h2>
        <p class="line">
          <svg width="28" height="29" viewBox="0 0 28 29" fill="none" stroke="#999" stroke-width="2"><path d="M7 1C3 3 1 6 1 9C2 18 10 27 19 28C23 28 26 25 27 22L20 17L16 20C12 18 10 15 8 12L12 8Z" stroke-linejoin="round" /></svg>+33(0)1 81 93 50 95 / +33(0)1 81 93 50 96
        </p>
        <p class="line">
          <svg width="28" height="18" viewBox="0 0 28 18" fill="none" stroke="#999" stroke-width="2"><path d="M1 1H27V17H1ZM5 5L14 11L23 5" /></svg><a href="mailto:contact@corwave.com">contact@corwave.com</a>
        </p>
        <h2>Suivez-nous</h2>
        <div class="social">
          <a href="#" aria-label="LinkedIn"><svg width="34" height="34"><use href="#linkedin" /></svg></a>
          <a href="#" aria-label="Twitter"><svg width="34" height="30"><use href="#twitter" /></svg></a>
        </div>
      </aside>

      <form class="form" @submit.prevent>
        <div class="fields">
          <div v-for="f in fields" :key="f.id" class="field">
            <label :for="f.id">{{ f.label }} <em v-if="f.required">*</em></label>
            <input :id="f.id" :type="f.type" :placeholder="f.hint" />
          </div>
          <div class="field wide">
            <label for="message">Message <em>*</em></label>
            <textarea id="message" placeholder="Entrez votre texte ici"></textarea>
          </div>
        </div>
        <div class="consent">
          <input id="consent" v-model="consent" type="checkbox" />
          <label for="consent">En soumettant ce formulaire je consens à être recontacté(e) dans le cadre de cette relation commerciale. <em>*</em></label>
        </div>
        <div class="attach">
          <span>Joindre un fichier:</span>
          <button type="button">Rechercher <svg width="28" height="18"><use href="#arrow" /></svg></button>
        </div>
        <div class="captcha">
          <input id="human" v-model="human" type="checkbox" />
          <label for="human">I'm not a robot</label>
          <div class="captcha-brand">
            <svg width="56" height="56" viewBox="0 0 64 64">
              <path fill="#1c3aa9" d="M64 31.955l-.033-1.37V4.687l-7.16 7.16C50.948 4.674 42.033.093 32.05.093c-10.4 0-19.622 4.96-25.458 12.64l11.736 11.86a15.55 15.55 0 0 1 4.754-5.334c2.05-1.6 4.952-2.906 8.968-2.906.485 0 .86.057 1.135.163 4.976.393 9.288 3.14 11.828 7.124l-8.307 8.307L64 31.953" />
              <path fill="#4285f4" d="M31.862.094l-1.37.033H4.594l7.16 7.16C4.58 13.147 0 22.06 0 32.046c0 10.4 4.96 19.622 12.64 25.458L24.5 45.768a15.55 15.55 0 0 1-5.334-4.754c-1.6-2.05-2.906-4.952-2.906-8.968 0-.485.057-.86.163-1.135.393-4.976 3.14-9.288 7.124-11.828l8.307 8.307L31.86.095" />
              <path fill="#ababab" d="M.001 32.045l.033 1.37v25.898l7.16-7.16c5.86 7.173 14.774 11.754 24.76 11.754 10.4 0 19.622-4.96 25.458-12.64l-11.736-11.86a15.55 15.55 0 0 1-4.754 5.334c-2.05 1.6-4.952 2.906-8.968 2.906-.485 0-.86-.057-1.135-.163-4.976-.393-9.288-3.14-11.828-7.124l8.307-8.307L0 32.047" />
            </svg>
            <span>reCAPTCHA</span>
            <small><a href="#">Privacy</a> - <a href="#">Terms</a></small>
          </div>
        </div>
        <button class="send" type="submit">
          <svg class="waves" width="230" height="92" viewBox="0 0 230 92" fill="none" stroke="#72c3e5" stroke-width="4" stroke-linecap="round">
            <path d="M3 22Q21 3 50 3T97 22M136 71Q153 89 182 89T228 71" />
          </svg>
          Envoyer
          <svg width="28" height="18"><use href="#arrow" /></svg>
        </button>
      </form>
    </main>

    <section class="map" aria-label="Map">
      <svg class="canvas" viewBox="0 0 2880 1200" preserveAspectRatio="xMidYMid slice">
        <defs>
          <linearGradient id="beam" x1="0" y1="0" x2="0" y2="1">
            <stop offset="0" stop-color="#8c9ae0" stop-opacity=".7" />
            <stop offset="1" stop-color="#b9c4ff" stop-opacity="0" />
          </linearGradient>
        </defs>
        <path :d="lanes" class="lane" />
        <path v-for="(d, i) in streets" :key="'s' + i" :d="d" class="street" />
        <path v-for="(d, i) in highways" :key="'h' + i" :d="d" class="highway" />
        <path v-for="(r, i) in rivers" :key="'r' + i" :d="r.d" class="river" :stroke-width="r.w" />
        <path v-for="(d, i) in bridges" :key="'k' + i" :d="d" class="street" />
        <path v-for="(d, i) in ponds" :key="'p' + i" :d="d" class="pond" />
        <path v-for="(d, i) in borders" :key="'b' + i" :d="d" class="border" />
        <g v-for="(s, i) in shields" :key="'n' + i" class="shield" :class="{ minor: s.minor }">
          <rect :x="s.x - s.w / 2" :y="s.y - 11" :width="s.w" height="22" />
          <text :x="s.x" :y="s.y + 6">{{ s.name }}</text>
        </g>
        <path d="M1440 615L1374 692H1506Z" fill="url(#beam)" />
        <text v-for="(l, i) in labels" :key="'l' + i" :class="l.kind" :x="l.x" :y="l.y" :transform="l.turn">{{ l.text }}</text>
        <path d="M1440 613L1384 555A70 70 0 1 1 1496 555Z" fill="#fff" stroke="#949494" stroke-width="6" stroke-linejoin="round" />
        <use href="#corwave" x="1386" y="488" width="106" height="44" />
        <text class="google" x="18" y="1183">Google</text>
      </svg>

      <div class="types">
        <button type="button" class="on">Map</button>
        <button type="button">Satellite</button>
      </div>
      <button type="button" class="tool full" aria-label="Fullscreen">
        <svg width="34" height="34" viewBox="0 0 34 34" fill="none" stroke="#666" stroke-width="4"><path d="M2 12V2H12M22 2H32V12M32 22V32H22M12 32H2V22" /></svg>
      </button>
      <div class="tools">
        <button type="button" class="tool" aria-label="Street View">
          <svg width="34" height="58" viewBox="0 0 34 58" fill="#fbbc2b" stroke="#c08a2c" stroke-width="2">
            <path d="M8 21H26L33 42L28 43L25 36V57H18V42H16V57H9V36L6 43L1 42Z" stroke-linejoin="round" />
            <path d="M11 21H23L17 29Z" fill="#e8871e" stroke="none" />
            <circle cx="17" cy="11" r="10" />
          </svg>
        </button>
        <div class="zoom">
          <button type="button" class="tool" aria-label="Zoom in"><svg width="34" height="34" viewBox="0 0 34 34"><path d="M0 17H34M17 0V34" stroke="#666" stroke-width="7" /></svg></button>
          <button type="button" class="tool" aria-label="Zoom out"><svg width="34" height="34" viewBox="0 0 34 34"><path d="M0 17H34" stroke="#666" stroke-width="7" /></svg></button>
        </div>
      </div>
      <div class="legal">
        <button type="button">Keyboard shortcuts</button>
        <span>Map data ©2022 Google</span>
        <span class="scale">2 km <i></i></span>
        <a href="#">Terms of Use</a>
        <a href="#">Report a map error</a>
      </div>
    </section>

    <footer class="footer">
      <div class="columns">
        <section v-for="group in footer" :key="group.title">
          <h3>{{ group.title }}</h3>
          <div class="lists">
            <ul v-for="(list, i) in group.lists" :key="i">
              <li v-for="link in list" :key="link"><a href="#">{{ link }}</a></li>
            </ul>
          </div>
        </section>
      </div>
      <div class="bottom">
        <div class="marks">
          <a href="#" aria-label="LinkedIn"><svg width="28" height="28"><use href="#linkedin" /></svg></a>
          <a href="#" aria-label="Twitter"><svg width="28" height="24"><use href="#twitter" /></svg></a>
        </div>
        <p>© Copyright CorWave SA 2018</p>
      </div>
    </footer>
  </div>
</template>

<style>
body {
  margin: 0;
  background: #fff;
}
</style>

<style scoped>
.page {
  font-family: Lato, sans-serif;
  color: #3c4454;
  background: #fff;
}
.page * {
  box-sizing: border-box;
}
.sprite {
  position: absolute;
  width: 0;
  height: 0;
}
svg {
  display: block;
  flex: none;
}
a {
  color: inherit;
  text-decoration: none;
}
button {
  font: inherit;
  color: inherit;
  background: none;
  border: 0;
  padding: 0;
}
p,
ul,
h1,
h2,
h3 {
  margin: 0;
  padding: 0;
}
em {
  font-style: normal;
  color: #d02a2a;
  margin-left: 3px;
}

.header {
  display: grid;
  grid-template-columns: 1fr auto 1fr;
  align-items: center;
  height: 184px;
  padding: 0 74px;
  font-size: 24px;
  letter-spacing: 2px;
  color: #6c6c6c;
}
.brand {
  display: flex;
}
.brand sup {
  padding-top: 16px;
  font-size: 10px;
  line-height: 14px;
  color: #273c7d;
}
.nav {
  display: flex;
  gap: 56px;
  text-transform: uppercase;
}
.nav a {
  display: flex;
  align-items: center;
  gap: 11px;
}
.nav .current {
  color: #c9c9c9;
}
.langs {
  text-align: right;
}
.lang-off {
  color: #999;
}
h1 {
  margin-top: 97px;
  font-size: 87px;
  line-height: 100px;
  font-weight: 700;
  text-align: center;
  color: #1f3f8a;
}

.main {
  display: grid;
  grid-template-columns: 587fr 1593fr 273fr;
  padding: 151px 111px 228px;
}
.aside {
  font-size: 30px;
  line-height: 36px;
  color: #949494;
}
h2 {
  font-size: 60px;
  line-height: 72px;
  font-weight: 300;
  color: #1b87b0;
  margin-bottom: 36px;
}
.spot {
  display: flex;
  gap: 20px;
  width: 360px;
  margin-bottom: 45px;
}
.spot + h2,
.line + h2 {
  margin-top: 74px;
}
.line {
  width: 370px;
  line-height: 39px;
  margin-bottom: 15px;
}
.line svg {
  display: inline-block;
  vertical-align: -5px;
  margin-right: 25px;
}
.line a {
  text-decoration: underline;
}
.social {
  display: flex;
  gap: 19px;
}
.social a {
  display: flex;
  align-items: center;
  justify-content: center;
  width: 74px;
  height: 74px;
  border: 2px solid #3c4454;
  border-radius: 50%;
  fill: #3c4454;
}

.form {
  font-size: 26px;
  line-height: 32px;
}
.fields {
  display: grid;
  grid-template-columns: 651fr 903fr;
  gap: 37px 39px;
}
.field {
  display: flex;
  flex-direction: column;
  gap: 9px;
}
.field label {
  padding-left: 19px;
}
.wide {
  grid-column: 1 / -1;
}
.field input,
.field textarea {
  width: 100%;
  height: 89px;
  padding: 0 37px;
  border: 2px solid #cbcbcb;
  border-radius: 4px;
  background: #fff;
  font: 30px/36px Lato, sans-serif;
  color: inherit;
}
.field textarea {
  height: 333px;
  padding-top: 18px;
}
.field ::placeholder {
  color: #cdcdcd;
  opacity: 1;
}
.consent {
  display: flex;
  align-items: center;
  gap: 10px;
  margin: 37px 0 0 19px;
}
.consent input,
.captcha input {
  appearance: none;
  margin: 0;
  width: 26px;
  height: 26px;
  border: 2px solid #cbcbcb;
  background: #fff;
}
.attach {
  display: flex;
  align-items: center;
  gap: 37px;
  margin: 46px 0 46px 57px;
}
.attach button,
.send {
  display: flex;
  align-items: center;
  gap: 18px;
  font-size: 24px;
  font-weight: 700;
  letter-spacing: 2px;
  text-transform: uppercase;
  color: #243c80;
}
.captcha {
  display: flex;
  align-items: center;
  width: 562px;
  height: 141px;
  padding: 0 20px 0 22px;
  border: 2px solid #d3d3d3;
  border-radius: 6px;
  background: #f9f9f9;
  box-shadow: 0 0 7px 1px rgba(0, 0, 0, 0.08);
  font-family: Roboto, sans-serif;
  color: #000;
}
.captcha input {
  width: 52px;
  height: 52px;
  border: 4px solid #c1c1c1;
  border-radius: 4px;
}
.captcha label {
  flex: 1;
  padding-left: 22px;
}
.captcha-brand {
  display: flex;
  flex-direction: column;
  align-items: center;
  font-size: 19px;
  line-height: 24px;
  color: #555;
}
.captcha-brand span {
  padding-top: 10px;
}
.captcha-brand small {
  font-size: 15px;
  line-height: 18px;
}
.send {
  position: relative;
  height: 92px;
  margin-top: 82px;
  padding-left: 54px;
  gap: 72px;
}
.waves {
  position: absolute;
  left: 0;
  top: 0;
}

.map {
  position: relative;
  overflow: hidden;
  font-family: Roboto, sans-serif;
}
.canvas {
  width: 100%;
  height: 1114px;
  background: #fefefe;
}
.lane,
.street,
.highway,
.river,
.border {
  fill: none;
  stroke-linecap: round;
  stroke-linejoin: round;
}
.lane {
  stroke: #efefef;
  stroke-width: 4px;
}
.street {
  stroke: #ececec;
  stroke-width: 5px;
}
.highway {
  stroke: #ebebeb;
  stroke-width: 8px;
}
.river {
  stroke: #9da8b5;
}
.pond {
  fill: #9da8b5;
}
.border {
  stroke: #a5a5a5;
  stroke-width: 2px;
  stroke-dasharray: 4 5;
}
.canvas text {
  text-anchor: middle;
  paint-order: stroke;
  stroke: #fff;
  stroke-width: 4px;
  stroke-linejoin: round;
  fill: #3f4654;
}
.canvas .start {
  text-anchor: start;
}
.canvas .town {
  font-size: 28px;
}
.canvas .city {
  font-size: 36px;
  font-weight: 500;
}
.canvas .capital {
  font-size: 52px;
  font-weight: 500;
}
.canvas .arr {
  font-size: 24px;
  font-weight: 500;
  letter-spacing: 2px;
}
.canvas .faded {
  opacity: 0.5;
}
.canvas .hamlet {
  font-size: 18px;
  font-weight: 500;
  letter-spacing: 2px;
}
.canvas .area {
  font-size: 18px;
  letter-spacing: 2px;
  fill: #68bfdf;
}
.canvas .dept {
  font-size: 28px;
  font-weight: 500;
  fill: #68c2e8;
}
.canvas .water {
  font-size: 22px;
  stroke: none;
  fill: #111;
}
.canvas .road {
  font-size: 20px;
  fill: #808080;
}
.shield rect {
  fill: #c6c6c6;
}
.canvas .shield text {
  font-size: 18px;
  font-weight: 700;
  stroke: none;
  fill: #fff;
}
.canvas .minor text {
  font-weight: 400;
  fill: #909090;
}
.canvas .google {
  font-size: 36px;
  font-weight: 500;
  text-anchor: start;
  stroke: #b5b5b5;
  stroke-width: 6px;
  fill: #fff;
}
.types {
  position: absolute;
  left: 19px;
  top: 18px;
  display: flex;
  font-size: 33px;
  color: #565656;
  box-shadow: 0 1px 7px rgba(0, 0, 0, 0.25);
}
.types button {
  height: 75px;
  padding: 0 31px;
  background: #fff;
  border-radius: 3px;
}
.types button + button {
  border-left: 2px solid #ededed;
}
.types .on {
  font-weight: 500;
  color: #000;
}
.tool {
  display: flex;
  align-items: center;
  justify-content: center;
  width: 74px;
  height: 75px;
  border-radius: 3px;
  background: #fff;
  box-shadow: 0 1px 7px rgba(0, 0, 0, 0.25);
}
.full {
  position: absolute;
  right: 19px;
  top: 18px;
}
.tools {
  position: absolute;
  right: 19px;
  bottom: 45px;
  display: flex;
  flex-direction: column;
  gap: 60px;
}
.zoom {
  background: #fff;
  box-shadow: 0 1px 7px rgba(0, 0, 0, 0.25);
}
.zoom .tool {
  box-shadow: none;
}
.zoom .tool + .tool {
  border-top: 2px solid #e6e6e6;
}
.legal {
  position: absolute;
  right: 0;
  bottom: 0;
  display: flex;
  align-items: center;
  gap: 20px;
  height: 26px;
  padding: 0 10px;
  font-size: 19px;
  color: #000;
  background: rgba(250, 250, 250, 0.75);
}
.scale {
  display: flex;
  align-items: center;
  gap: 7px;
}
.scale i {
  width: 150px;
  height: 12px;
  border: 3px solid #666;
  border-top: 0;
}

.footer {
  padding: 177px 74px 98px;
  background: #081628;
  color: #8a919c;
}
.columns {
  display: grid;
  grid-template-columns: 769fr 769fr 989fr;
}
h3 {
  padding-bottom: 28px;
  margin: 0 294px 66px 0;
  border-bottom: 2px solid #3a4554;
  font-size: 45px;
  line-height: 54px;
  font-weight: 300;
  color: #e8eaed;
}
section:last-child h3 {
  margin-right: 0;
}
.lists {
  display: grid;
  grid-template-columns: 513px 1fr;
  font-size: 30px;
  line-height: 36px;
}
ul {
  display: flex;
  flex-direction: column;
  gap: 18px;
  max-width: 350px;
  list-style: none;
}
section:last-child ul {
  max-width: none;
}
.bottom {
  display: flex;
  flex-direction: column;
  align-items: center;
  gap: 28px;
  margin-top: 187px;
  font-size: 24px;
  line-height: 30px;
  color: #4d5765;
}
.marks {
  display: flex;
  align-items: center;
  gap: 20px;
  fill: #a3a9b2;
}
</style>
